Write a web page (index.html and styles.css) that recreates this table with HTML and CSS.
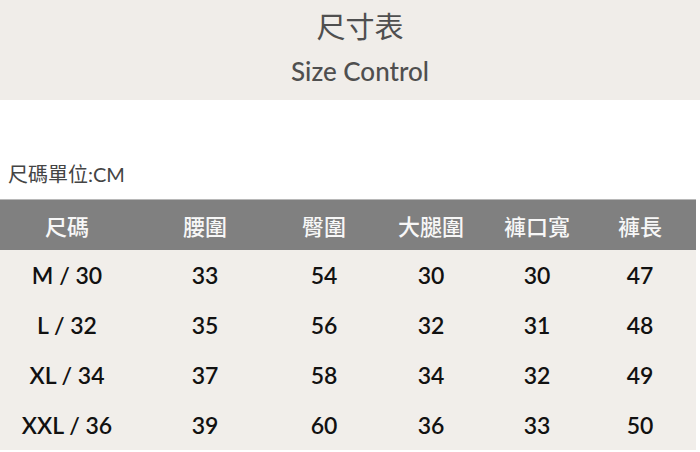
FILE: index.html
```html
<!DOCTYPE html>
<html lang="zh-Hant">
<head>
<meta charset="utf-8">
<link rel="stylesheet" href="styles.css">
</head>
<body>
<header class="band">
  <div class="title">尺寸表</div>
  <div class="subtitle">Size Control</div>
</header>
<div class="unit">尺碼單位:CM</div>
<table class="chart">
  <colgroup>
    <col class="c1"><col class="c2"><col class="c3"><col class="c4"><col class="c5"><col class="c6">
  </colgroup>
  <thead>
    <tr><th>尺碼</th><th>腰圍</th><th>臀圍</th><th>大腿圍</th><th>褲口寬</th><th>褲長</th></tr>
  </thead>
  <tbody>
    <tr><td>M / 30</td><td>33</td><td>54</td><td>30</td><td>30</td><td>47</td></tr>
    <tr><td>L / 32</td><td>35</td><td>56</td><td>32</td><td>31</td><td>48</td></tr>
    <tr><td>XL / 34</td><td>37</td><td>58</td><td>34</td><td>32</td><td>49</td></tr>
    <tr><td>XXL / 36</td><td>39</td><td>60</td><td>36</td><td>33</td><td>50</td></tr>
  </tbody>
</table>
</body>
</html>
```
FILE: styles.css
```css
html, body {
  margin: 0;
  padding: 0;
  background: #ffffff;
  font-family: Lato, "Noto Sans CJK TC", sans-serif;
}
.band {
  height: 100px;
  background: #f0ede9;
  box-sizing: border-box;
  padding: 6px 0 0 20px;
  text-align: center;
  color: #4f4f4f;
}
.title {
  font-size: 29px;
  line-height: 38px;
  font-family: "Noto Sans CJK TC", sans-serif;
}
.subtitle {
  margin-top: 11px;
  font-size: 26px;
  line-height: 32px;
  font-weight: 500;
}
.unit {
  height: 99px;
  box-sizing: border-box;
  padding: 61px 0 0 8px;
  font-size: 20px;
  line-height: 26px;
  color: #444444;
}
.chart {
  width: 696px;
  border-collapse: collapse;
  table-layout: fixed;
  background: #f1eeea;
}
.c1 { width: 134px; }
.c2 { width: 142px; }
.c3 { width: 96px; }
.c4 { width: 118px; }
.c5 { width: 94px; }
.c6 { width: 112px; }
.chart th {
  height: 50px;
  padding: 0;
  background: #808080;
  border-top: 1px solid #b8b8b8;
  color: #f7f7f7;
  font-weight: 500;
  font-size: 22px;
  text-align: center;
  font-family: "Noto Sans CJK TC", sans-serif;
}
.chart td {
  height: 50px;
  padding: 0;
  text-align: center;
  font-size: 23px;
  font-weight: 600;
  color: #111111;
}
```
